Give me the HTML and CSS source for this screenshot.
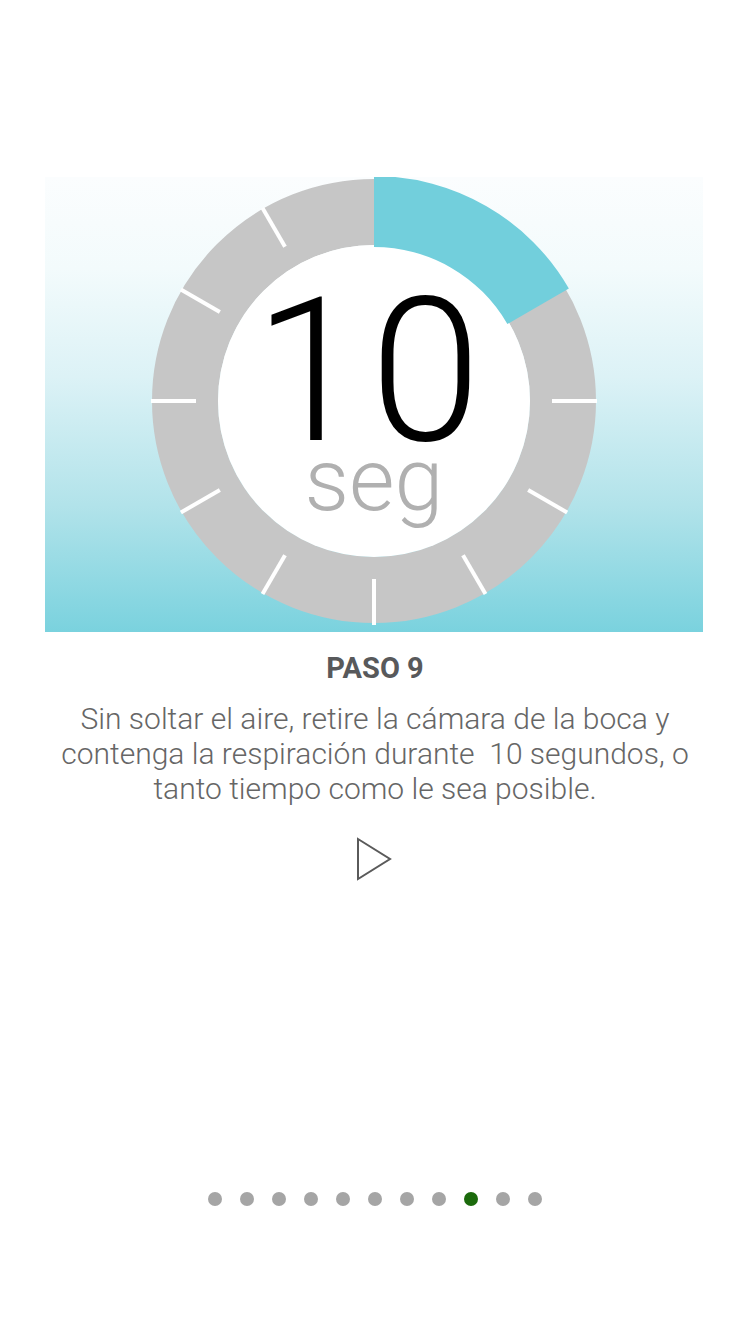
FILE: index.html
```html
<!DOCTYPE html>
<html lang="es">
<head>
<meta charset="utf-8">
<title>Paso 9</title>
<link rel="stylesheet" href="styles.css">
</head>
<body>
<main class="screen">
  <section class="hero">
    <svg class="ring" width="460" height="455" viewBox="-230 -224 460 455" aria-hidden="true">
      <circle cx="0" cy="0" r="189" fill="none" stroke="#c6c6c6" stroke-width="66"/>
      <circle cx="0" cy="0" r="156" fill="#ffffff"/>
      <path d="M0 -225 A225 225 0 0 1 194.86 -112.5 L133.37 -77 A154 154 0 0 0 0 -154 Z" fill="#72cfdc"/>
      <g stroke="#ffffff" stroke-width="4" stroke-linecap="butt">
        <line x1="0" y1="-178" x2="0" y2="-223" transform="rotate(90)"/>
        <line x1="0" y1="-178" x2="0" y2="-223" transform="rotate(120)"/>
        <line x1="0" y1="-178" x2="0" y2="-223" transform="rotate(150)"/>
        <line x1="0" y1="-178" x2="0" y2="-224" transform="rotate(180)"/>
        <line x1="0" y1="-178" x2="0" y2="-223" transform="rotate(210)"/>
        <line x1="0" y1="-178" x2="0" y2="-223" transform="rotate(240)"/>
        <line x1="0" y1="-178" x2="0" y2="-223" transform="rotate(270)"/>
        <line x1="0" y1="-178" x2="0" y2="-223" transform="rotate(300)"/>
        <line x1="0" y1="-178" x2="0" y2="-223" transform="rotate(330)"/>
      </g>
    </svg>
    <div class="counter">
      <span class="count">10</span>
      <span class="unit">seg</span>
    </div>
  </section>

  <h2 class="step">PASO 9</h2>
  <p class="desc">Sin soltar el aire, retire la cámara de la boca y contenga la respiración durante&nbsp; 10 segundos, o tanto tiempo como le sea posible.</p>

  <button class="play" type="button" aria-label="Reproducir">
    <svg width="40" height="46" viewBox="0 0 40 46">
      <polygon points="3,3 35,23 3,43" fill="none" stroke="#5a5a5a" stroke-width="2" stroke-linejoin="miter"/>
    </svg>
  </button>

  <nav class="dots">
    <span class="dot"></span>
    <span class="dot"></span>
    <span class="dot"></span>
    <span class="dot"></span>
    <span class="dot"></span>
    <span class="dot"></span>
    <span class="dot"></span>
    <span class="dot"></span>
    <span class="dot active"></span>
    <span class="dot"></span>
    <span class="dot"></span>
  </nav>
</main>
</body>
</html>
```

FILE: styles.css
```css
html, body {
  margin: 0;
  padding: 0;
  background: #ffffff;
}

body {
  font-family: Roboto, "Liberation Sans", sans-serif;
  width: 750px;
  height: 1334px;
  overflow: hidden;
}

.screen {
  display: flex;
  flex-direction: column;
  align-items: center;
  padding-top: 177px;
}

.hero {
  position: relative;
  width: 658px;
  height: 455px;
  margin-left: -2px;
  display: flex;
  justify-content: center;
  background: linear-gradient(to bottom, #fbfdfe 0%, #f3fbfc 20%, #dcf2f6 44%, #b2e3ea 72%, #7ad2de 100%);
}

.ring {
  display: block;
}

.counter {
  position: absolute;
  left: 0;
  right: 0;
  top: 120px;
  display: flex;
  flex-direction: column;
  align-items: center;
}

.count {
  font-family: Roboto, "Liberation Sans", sans-serif;
  font-weight: 300;
  font-size: 200px;
  line-height: 150px;
  color: #000000;
  letter-spacing: 5px;
  margin-left: -8px;
}

.unit {
  font-family: Roboto, "Liberation Sans", sans-serif;
  font-weight: 300;
  font-size: 88px;
  line-height: 66px;
  color: #b0b0b0;
}

.step {
  margin: 19px 0 0;
  font-family: Roboto, "Liberation Sans", sans-serif;
  font-weight: 700;
  font-size: 29px;
  line-height: 34px;
  color: #58595b;
}

.desc {
  margin: 16px 0 0;
  width: 640px;
  font-family: Roboto, "Liberation Sans", sans-serif;
  font-weight: 300;
  font-size: 30px;
  line-height: 35px;
  color: #666666;
  text-align: center;
}

.play {
  margin: 30px 0 0;
  padding: 0;
  border: 0;
  background: none;
  width: 40px;
  height: 46px;
  display: block;
}

.play svg {
  display: block;
}

.dots {
  margin-top: 310px;
  display: flex;
  gap: 18px;
}

.dot {
  width: 14px;
  height: 14px;
  border-radius: 50%;
  background: #a5a5a5;
}

.dot.active {
  background: #1b6a0c;
}
```
